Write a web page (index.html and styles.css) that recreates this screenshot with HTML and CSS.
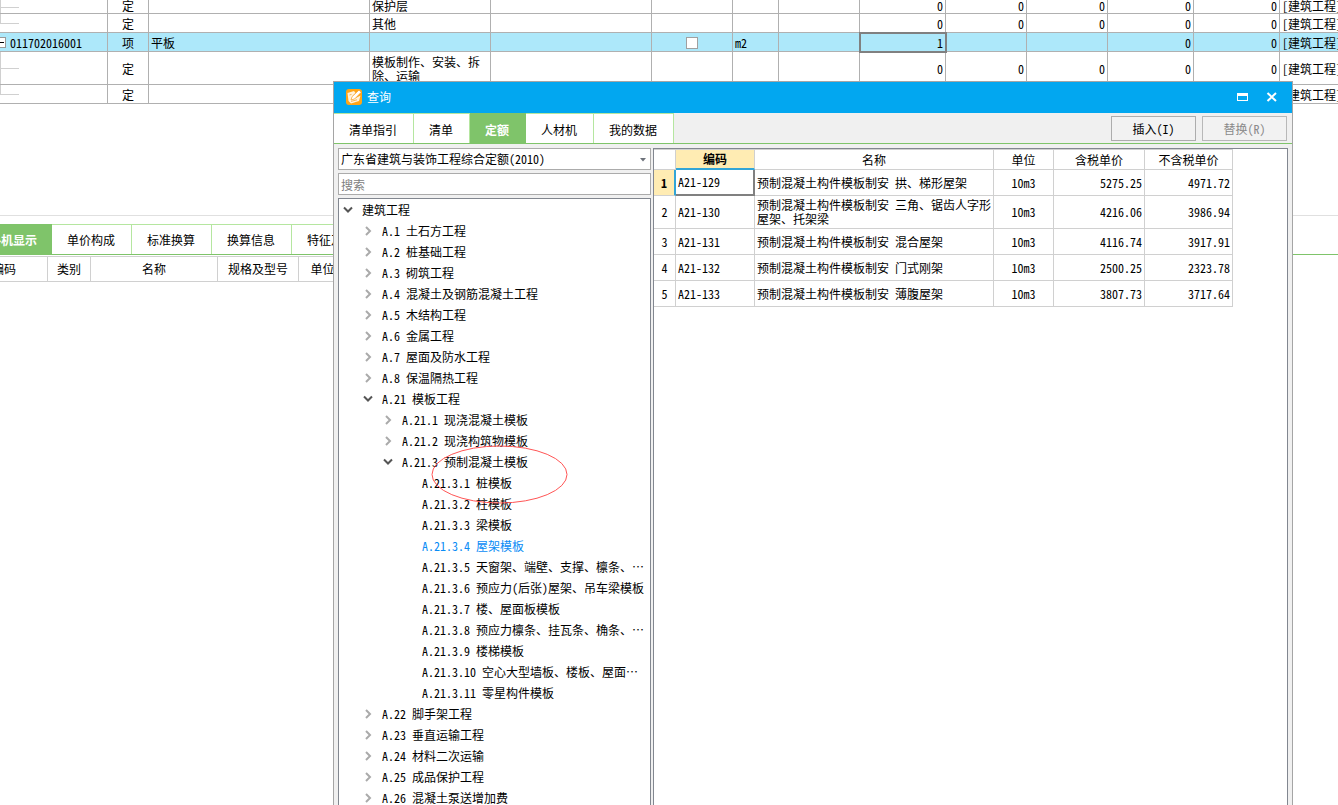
FILE: index.html
```html
<!DOCTYPE html>
<html lang="zh-CN">
<head>
<meta charset="utf-8">
<title>查询</title>
<link rel="stylesheet" href="styles.css">
</head>
<body>
<main class="workspace">
  <table class="bill">
    <colgroup>
      <col class="w108"><col class="w41"><col class="w221"><col class="w121"><col class="w161"><col class="w81"><col class="w46"><col class="w81"><col class="w86"><col class="w81"><col class="w81"><col class="w86"><col class="w86"><col>
    </colgroup>
    <tbody>
      <tr class="row first"><td class="branch more"></td><td class="mid">定</td><td></td><td>保护层</td><td></td><td></td><td></td><td></td><td class="num">0</td><td class="num">0</td><td class="num">0</td><td class="num">0</td><td class="num">0</td><td class="major">[建筑工程]</td></tr>
      <tr class="row"><td class="branch"></td><td class="mid">定</td><td></td><td>其他</td><td></td><td></td><td></td><td></td><td class="num">0</td><td class="num">0</td><td class="num">0</td><td class="num">0</td><td class="num">0</td><td class="major">[建筑工程]</td></tr>
      <tr class="row current"><td class="code"><button class="fold" type="button" aria-label="折叠"></button>011702016001</td><td class="mid">项</td><td>平板</td><td></td><td></td><td class="mid"><input class="tick" type="checkbox" aria-label="选择"></td><td>m2</td><td></td><td class="num picked">1</td><td></td><td></td><td class="num">0</td><td class="num">0</td><td class="major">[建筑工程]</td></tr>
      <tr class="row tall"><td class="branch more"></td><td class="mid">定</td><td></td><td>模板制作、安装、拆除、运输</td><td></td><td></td><td></td><td></td><td class="num">0</td><td class="num">0</td><td class="num">0</td><td class="num">0</td><td class="num">0</td><td class="major">[建筑工程]</td></tr>
      <tr class="row"><td class="branch"></td><td class="mid">定</td><td></td><td></td><td></td><td></td><td></td><td></td><td></td><td></td><td></td><td></td><td></td><td class="major">[建筑工程]</td></tr>
    </tbody>
  </table>

  <section class="detail">
    <nav class="tabs detail-tabs">
      <button class="tab on cut" type="button">工料机显示</button>
      <button class="tab" type="button">单价构成</button>
      <button class="tab" type="button">标准换算</button>
      <button class="tab" type="button">换算信息</button>
      <button class="tab" type="button">特征及内容</button>
    </nav>
    <div class="detail-head">
      <span class="head-cell w48">编码</span>
      <span class="head-cell w43">类别</span>
      <span class="head-cell w127">名称</span>
      <span class="head-cell w81">规格及型号</span>
      <span class="head-cell w48">单位</span>
    </div>
  </section>
</main>

<section class="dialog" role="dialog" aria-labelledby="dialog-title">
  <header class="titlebar">
    <svg class="logo" viewBox="0 0 16 16" aria-hidden="true">
      <rect width="16" height="16" rx="3" fill="#ffa516"/>
      <path d="M1.5 4 8 2 9.5 4 6.5 7 8.5 9.8 14.5 6.5 13 12 5 14.5 2.5 12z" fill="#fff3dc"/>
      <path d="M13 1 15.2 3.3 8.7 9.9 5 11 6.1 7.6z" fill="#fff" stroke="#f39a18" stroke-width=".7"/>
      <path d="M3.5 6 5.5 5.4M5 12.4 11 10.8" stroke="#f3a433" stroke-width=".8"/>
    </svg>
    <h1 class="title" id="dialog-title">查询</h1>
    <button class="win" type="button" aria-label="最大化"><svg width="12" height="12" viewBox="0 0 12 12"><path d="M0 2h11v8H0zM1 5v4h9V5z" fill="#fff" fill-rule="evenodd"/></svg></button>
    <button class="win" type="button" aria-label="关闭"><svg width="12" height="12" viewBox="0 0 12 12"><path d="M1.5 2 10 10M10 2 1.5 10" stroke="#fff" stroke-width="2"/></svg></button>
  </header>

  <div class="toolbar">
    <nav class="tabs">
      <button class="tab" type="button">清单指引</button>
      <button class="tab" type="button">清单</button>
      <button class="tab on" type="button">定额</button>
      <button class="tab" type="button">人材机</button>
      <button class="tab" type="button">我的数据</button>
    </nav>
    <div class="actions">
      <button class="action" type="button">插入(I)</button>
      <button class="action" type="button" disabled>替换(R)</button>
    </div>
  </div>

  <div class="body">
    <aside class="side">
      <div class="picker">
        <select class="field" aria-label="定额库"><option>广东省建筑与装饰工程综合定额(2010)</option></select>
        <svg class="arrow" width="6" height="4" viewBox="0 0 6 4" aria-hidden="true"><path d="M0 0h6L3 3.5z" fill="#6d727a"/></svg>
      </div>
      <input class="field" type="text" placeholder="搜索" aria-label="搜索">
      <div class="tree">
        <ul class="branchlist">
          <li><div class="node"><svg class="chev" viewBox="0 0 10 10"><path d="M1 2.5 5 6.5 9 2.5" class="open"/></svg>建筑工程</div>
            <ul class="branchlist sub">
              <li class="node"><svg class="chev" viewBox="0 0 10 10"><path d="M3 1 7 5 3 9" class="shut"/></svg>A.1 土石方工程</li>
              <li class="node"><svg class="chev" viewBox="0 0 10 10"><path d="M3 1 7 5 3 9" class="shut"/></svg>A.2 桩基础工程</li>
              <li class="node"><svg class="chev" viewBox="0 0 10 10"><path d="M3 1 7 5 3 9" class="shut"/></svg>A.3 砌筑工程</li>
              <li class="node"><svg class="chev" viewBox="0 0 10 10"><path d="M3 1 7 5 3 9" class="shut"/></svg>A.4 混凝土及钢筋混凝土工程</li>
              <li class="node"><svg class="chev" viewBox="0 0 10 10"><path d="M3 1 7 5 3 9" class="shut"/></svg>A.5 木结构工程</li>
              <li class="node"><svg class="chev" viewBox="0 0 10 10"><path d="M3 1 7 5 3 9" class="shut"/></svg>A.6 金属工程</li>
              <li class="node"><svg class="chev" viewBox="0 0 10 10"><path d="M3 1 7 5 3 9" class="shut"/></svg>A.7 屋面及防水工程</li>
              <li class="node"><svg class="chev" viewBox="0 0 10 10"><path d="M3 1 7 5 3 9" class="shut"/></svg>A.8 保温隔热工程</li>
              <li><div class="node"><svg class="chev" viewBox="0 0 10 10"><path d="M1 2.5 5 6.5 9 2.5" class="open"/></svg>A.21 模板工程</div>
                <ul class="branchlist sub">
                  <li class="node"><svg class="chev" viewBox="0 0 10 10"><path d="M3 1 7 5 3 9" class="shut"/></svg>A.21.1 现浇混凝土模板</li>
                  <li class="node"><svg class="chev" viewBox="0 0 10 10"><path d="M3 1 7 5 3 9" class="shut"/></svg>A.21.2 现浇构筑物模板</li>
                  <li><div class="node"><svg class="chev" viewBox="0 0 10 10"><path d="M1 2.5 5 6.5 9 2.5" class="open"/></svg>A.21.3 预制混凝土模板</div>
                    <ul class="branchlist sub leaves">
                      <li class="node">A.21.3.1 桩模板</li>
                      <li class="node">A.21.3.2 柱模板</li>
                      <li class="node">A.21.3.3 梁模板</li>
                      <li class="node chosen">A.21.3.4 屋架模板</li>
                      <li class="node">A.21.3.5 天窗架、端壁、支撑、檩条、⋯</li>
                      <li class="node">A.21.3.6 预应力(后张)屋架、吊车梁模板</li>
                      <li class="node">A.21.3.7 楼、屋面板模板</li>
                      <li class="node">A.21.3.8 预应力檩条、挂瓦条、桷条、⋯</li>
                      <li class="node">A.21.3.9 楼梯模板</li>
                      <li class="node">A.21.3.10 空心大型墙板、楼板、屋面⋯</li>
                      <li class="node">A.21.3.11 零星构件模板</li>
                    </ul>
                  </li>
                </ul>
              </li>
              <li class="node"><svg class="chev" viewBox="0 0 10 10"><path d="M3 1 7 5 3 9" class="shut"/></svg>A.22 脚手架工程</li>
              <li class="node"><svg class="chev" viewBox="0 0 10 10"><path d="M3 1 7 5 3 9" class="shut"/></svg>A.23 垂直运输工程</li>
              <li class="node"><svg class="chev" viewBox="0 0 10 10"><path d="M3 1 7 5 3 9" class="shut"/></svg>A.24 材料二次运输</li>
              <li class="node"><svg class="chev" viewBox="0 0 10 10"><path d="M3 1 7 5 3 9" class="shut"/></svg>A.25 成品保护工程</li>
              <li class="node"><svg class="chev" viewBox="0 0 10 10"><path d="M3 1 7 5 3 9" class="shut"/></svg>A.26 混凝土泵送增加费</li>
            </ul>
          </li>
        </ul>
      </div>
    </aside>

    <div class="result">
      <table class="quota">
        <colgroup><col class="w22"><col class="w79"><col class="w239"><col class="w60"><col class="w91"><col class="w88"></colgroup>
        <thead>
          <tr><th></th><th class="hot">编码</th><th>名称</th><th>单位</th><th>含税单价</th><th>不含税单价</th></tr>
        </thead>
        <tbody>
          <tr><th class="hot">1</th><td class="focus">A21-129</td><td>预制混凝土构件模板制安 拱、梯形屋架</td><td class="mid">10m3</td><td class="num">5275.25</td><td class="num">4971.72</td></tr>
          <tr class="double"><th>2</th><td>A21-130</td><td>预制混凝土构件模板制安 三角、锯齿人字形屋架、托架梁</td><td class="mid">10m3</td><td class="num">4216.06</td><td class="num">3986.94</td></tr>
          <tr><th>3</th><td>A21-131</td><td>预制混凝土构件模板制安 混合屋架</td><td class="mid">10m3</td><td class="num">4116.74</td><td class="num">3917.91</td></tr>
          <tr><th>4</th><td>A21-132</td><td>预制混凝土构件模板制安 门式刚架</td><td class="mid">10m3</td><td class="num">2500.25</td><td class="num">2323.78</td></tr>
          <tr><th>5</th><td>A21-133</td><td>预制混凝土构件模板制安 薄腹屋架</td><td class="mid">10m3</td><td class="num">3807.73</td><td class="num">3717.64</td></tr>
        </tbody>
      </table>
    </div>
  </div>
  <svg class="mark" viewBox="0 0 137 59" aria-hidden="true"><ellipse cx="68.5" cy="29.5" rx="67.5" ry="28.5"/></svg>
</section>
</body>
</html>
```
FILE: styles.css
```css
* { box-sizing: border-box; }

body {
  margin: 0;
  height: 100vh;
  overflow: hidden;
  position: relative;
  background: #fff;
  color: #000;
  font: 12px/14px "Noto Sans CJK SC", sans-serif;
  font-feature-settings: "hwid";
}

button, input, select { font: inherit; font-feature-settings: inherit; color: inherit; }

/* column widths */
.w22 { width: 22px; }
.w41 { width: 41px; }
.w43 { width: 43px; }
.w46 { width: 46px; }
.w48 { width: 48px; }
.w60 { width: 60px; }
.w79 { width: 79px; }
.w81 { width: 81px; }
.w86 { width: 86px; }
.w88 { width: 88px; }
.w91 { width: 91px; }
.w108 { width: 108px; }
.w121 { width: 121px; }
.w127 { width: 127px; }
.w161 { width: 161px; }
.w221 { width: 221px; }
.w239 { width: 239px; }

/* bill of quantities behind the dialog */
.bill {
  width: 100%;
  table-layout: fixed;
  border-collapse: separate;
  border-spacing: 0;
}
.bill td {
  height: 19px;
  padding: 2px 2px 0;
  border-right: 1px solid #b0b0b0;
  border-bottom: 1px solid #b0b0b0;
  overflow: hidden;
}
.bill .first td { height: 14px; padding-top: 0; padding-bottom: 2px; line-height: 11px; }
.bill .tall td { height: 33px; }
.bill .mid, .quota .mid { text-align: center; }
.bill .num { text-align: right; }
.bill .major { border-right: 0; white-space: nowrap; }
.current { background: #ade8fa; }
.bill .code { position: relative; padding-left: 10px; }
.bill .picked { outline: 2px solid #808080; outline-offset: -1px; }
.branch { position: relative; }
.branch::before {
  content: "";
  position: absolute;
  left: 0;
  top: 0;
  width: 18px;
  height: 50%;
  border: solid #d0d0d0;
  border-width: 0 0 1px 1px;
}
.more::after {
  content: "";
  position: absolute;
  left: 0;
  top: 50%;
  height: 50%;
  border-left: 1px solid #d0d0d0;
}
.fold {
  position: absolute;
  left: -6px;
  top: 4px;
  width: 12px;
  height: 11px;
  padding: 0;
  border: 1px solid #999;
  background: linear-gradient(#000, #000) center / 7px 1px no-repeat #fff;
}
.tick {
  appearance: none;
  display: block;
  width: 12px;
  height: 12px;
  margin: 0 auto;
  border: 1px solid #a0a0a0;
  background: #fff;
}

/* lower pane */
.detail { margin-top: 111px; border-top: 1px solid #e0e0e0; padding-top: 8px; }
.tabs { display: flex; }
.tab {
  height: 30px;
  padding: 2px 16px 0 15px;
  border: 0;
  border-top: 1px solid #b5e6a0;
  border-right: 1px solid #b5e6a0;
  background: #fff;
  white-space: nowrap;
}
.tab.on { background: #7fc46a; border-color: #7fc46a; color: #fff; font-weight: bold; }
.detail-tabs { border-bottom: 1px solid #7fc46a; }
.detail-tabs .tab { padding-top: 0; }
.tab.cut {
  display: flex;
  align-items: center;
  justify-content: flex-end;
  width: 52px;
  padding-left: 0;
  padding-right: 14px;
  overflow: hidden;
}
.detail-head { display: flex; margin-top: 1px; }
.head-cell {
  height: 26px;
  line-height: 24px;
  border: 1px solid #d0d0d0;
  border-left: 0;
  text-align: center;
  white-space: nowrap;
}
.head-cell:first-child { display: flex; justify-content: flex-end; padding-right: 31px; overflow: hidden; }

/* dialog */
.dialog {
  position: absolute;
  left: 333px;
  right: 45px;
  top: 81px;
  bottom: 0;
  display: flex;
  flex-direction: column;
  border: 1px solid #a5a5a5;
  border-bottom: 0;
  background: #f0f0f0;
}
.titlebar {
  display: flex;
  align-items: center;
  height: 31px;
  padding: 0 14px 1px 12px;
  background: #02a7f0;
  color: #fff;
}
.logo { width: 16px; height: 16px; }
.title { flex: 1; margin: 0 0 0 5px; font-size: 12px; font-weight: normal; }
.win { display: flex; padding: 0; border: 0; background: none; }
.win + .win { margin-left: 17px; }
.toolbar {
  display: flex;
  justify-content: space-between;
  align-items: flex-start;
  border-bottom: 1px solid #7fc46a;
}
.actions { display: flex; gap: 6px; padding: 3px 5px 0 0; }
.action {
  width: 85px;
  height: 25px;
  padding: 0;
  border: 1px solid #adadad;
  background: #f2f2f2;
}
.action:disabled { color: #8a8a8a; border-color: #b8b8b8; }
.body { display: flex; flex: 1; gap: 2px; min-height: 0; padding: 4px 4px 0; }

.side { display: flex; flex-direction: column; gap: 3px; width: 313px; min-height: 0; }
.picker { position: relative; display: flex; }
.field {
  appearance: none;
  width: 100%;
  height: 22px;
  padding: 0 2px;
  border: 1px solid #ababab;
  border-radius: 0;
  background: #fff;
}
.field::placeholder { color: #808080; }
.arrow { position: absolute; right: 5px; top: 10px; }
.tree {
  flex: 1;
  min-height: 0;
  overflow: hidden;
  border: 1px solid #828790;
  border-bottom: 0;
  background: #fff;
}
.branchlist { margin: 0; padding: 0 0 0 4px; list-style: none; }
.sub { padding-left: 20px; }
.leaves { padding-left: 39px; }
.node { display: flex; align-items: center; height: 21px; white-space: pre; }
.chev { width: 10px; height: 10px; margin-right: 9px; fill: none; stroke-width: 2; }
.open { stroke: #555; }
.shut { stroke: #aaa; }
.chosen { color: #0a8cf5; }

.result {
  flex: 1;
  min-width: 0;
  border: 1px solid #828790;
  border-bottom: 0;
  background: #fff;
}
.quota { table-layout: fixed; width: 579px; border-collapse: separate; border-spacing: 0; }
.quota th, .quota td {
  height: 26px;
  padding: 0 2px;
  border-right: 1px solid #d0d0d0;
  border-bottom: 1px solid #d0d0d0;
}
.quota th { padding: 0; font-weight: normal; text-align: center; }
.quota thead th { height: 21px; border-top: 1px solid #d0d0d0; }
.quota .double > * { height: 33px; }
.quota .num { text-align: right; }
.quota .hot { background: #ffecb3; font-weight: bold; }
.quota thead .hot { border-bottom: 2px solid #32a5d7; }
.quota tbody .hot { border-right: 2px solid #32a5d7; }
.quota .focus { border-right: 2px solid #808080; border-bottom: 2px solid #808080; }

/* hand-drawn annotation over the tree */
.mark {
  position: absolute;
  left: 97px;
  top: 363px;
  width: 137px;
  height: 59px;
  fill: none;
  stroke: #f55;
  pointer-events: none;
}
```
